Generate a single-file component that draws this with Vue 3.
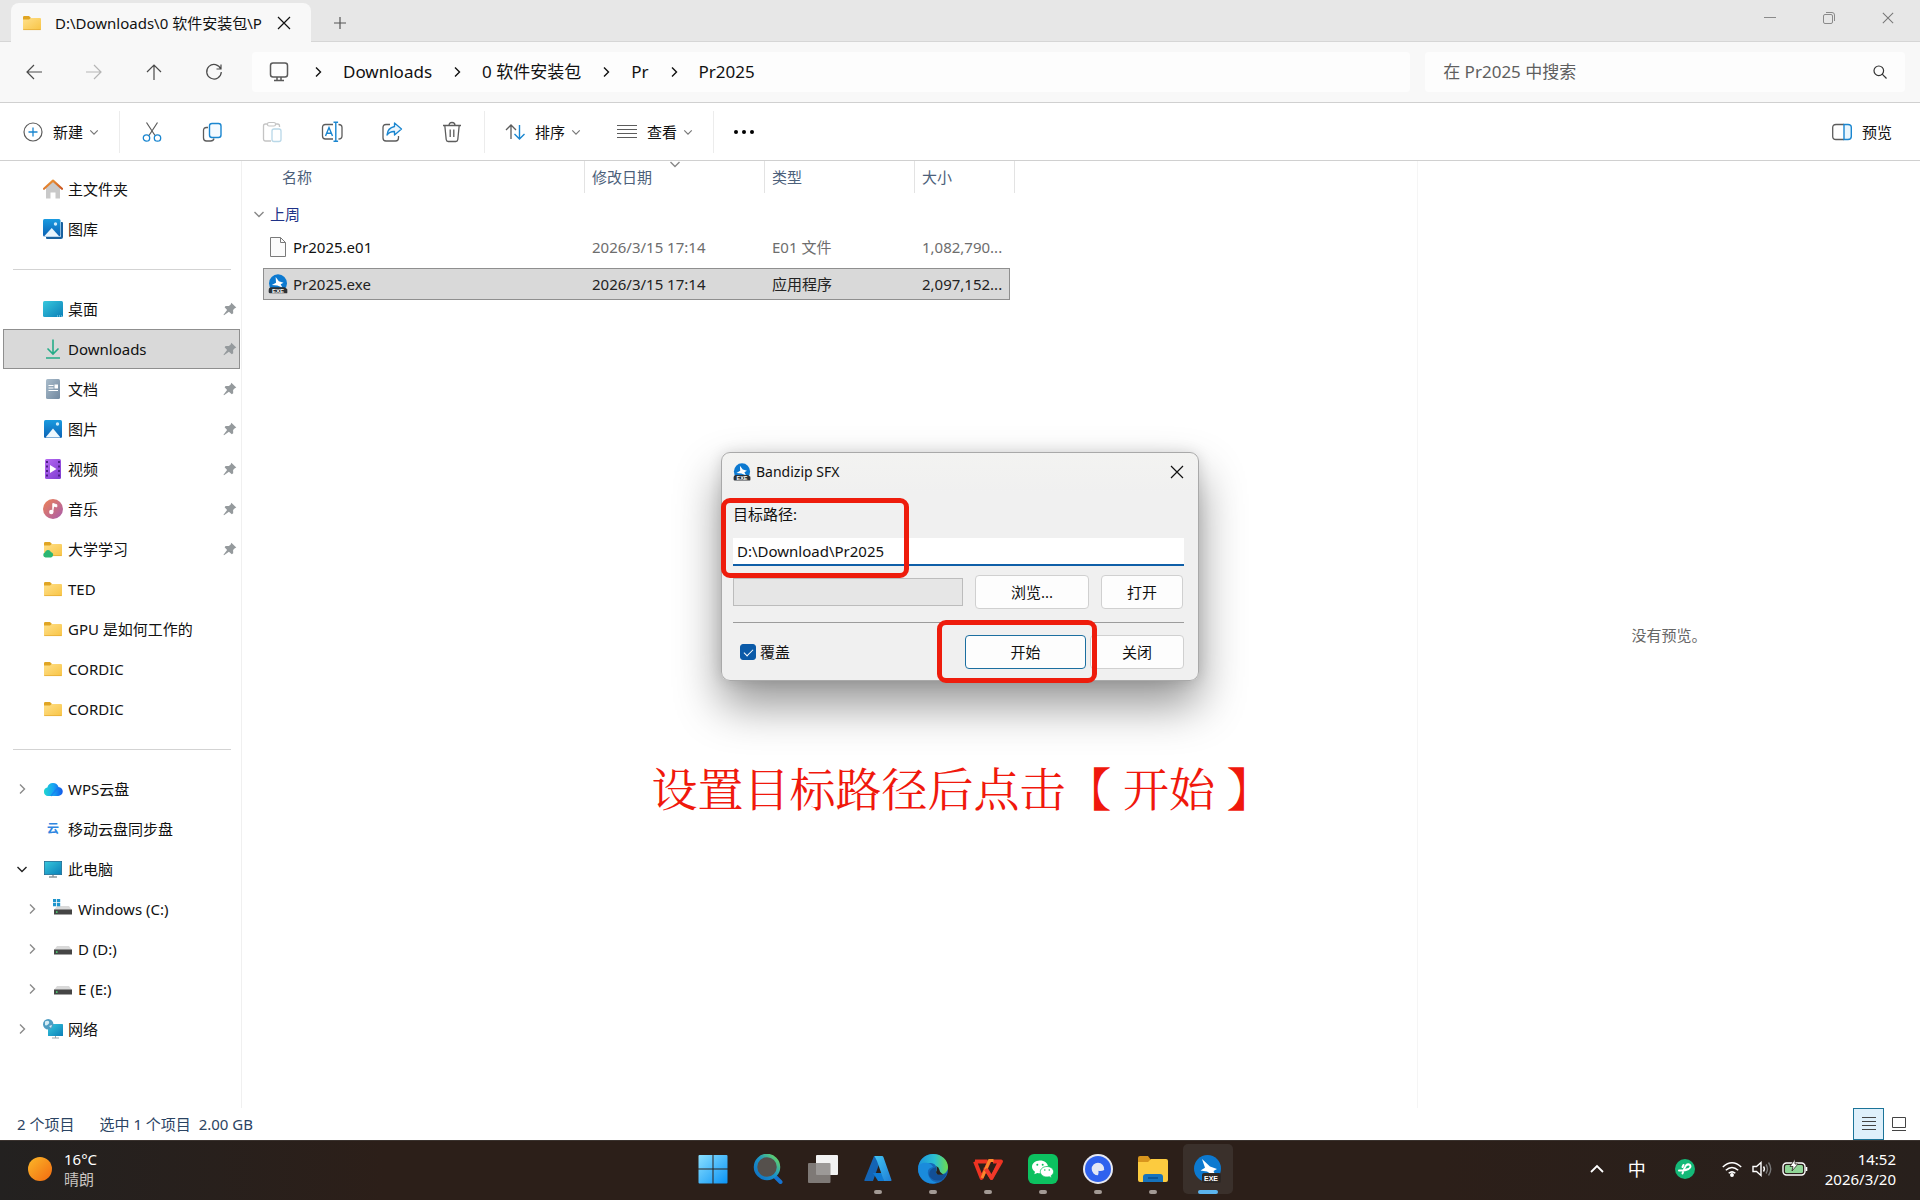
<template>
  <!-- shared icon shapes -->
  <svg class="sprite" aria-hidden="true">
    <defs>
      <linearGradient id="g-folder" x1="0" y1="0" x2="1" y2="1">
        <stop offset="0" stop-color="#ffe08a" />
        <stop offset="1" stop-color="#f8c445" />
      </linearGradient>
      <linearGradient id="g-desk" x1="0" y1="0" x2="1" y2="1">
        <stop offset="0" stop-color="#37c8dd" />
        <stop offset="1" stop-color="#0b7fb8" />
      </linearGradient>
      <linearGradient id="g-blue" x1="0" y1="0" x2="0" y2="1">
        <stop offset="0" stop-color="#1a9be0" />
        <stop offset="1" stop-color="#0c62b4" />
      </linearGradient>
      <linearGradient id="g-grey" x1="0" y1="0" x2="1" y2="1">
        <stop offset="0" stop-color="#a9bccb" />
        <stop offset="1" stop-color="#71889f" />
      </linearGradient>
      <linearGradient id="g-video" x1="0" y1="0" x2="1" y2="1">
        <stop offset="0" stop-color="#b669f2" />
        <stop offset="1" stop-color="#7d3cd0" />
      </linearGradient>
      <linearGradient id="g-music" x1="0" y1="0" x2="1" y2="1">
        <stop offset="0" stop-color="#ef8354" />
        <stop offset="1" stop-color="#a75cae" />
      </linearGradient>
      <linearGradient id="g-wps" x1="0" y1="0" x2="1" y2="0">
        <stop offset="0" stop-color="#1fd6d0" />
        <stop offset="0.5" stop-color="#18a5f3" />
        <stop offset="1" stop-color="#1258ea" />
      </linearGradient>
      <linearGradient id="g-roof" x1="0" y1="0" x2="1" y2="1">
        <stop offset="0" stop-color="#f2a13c" />
        <stop offset="1" stop-color="#c9541f" />
      </linearGradient>
      <linearGradient id="g-win" x1="0" y1="0" x2="1" y2="1">
        <stop offset="0" stop-color="#8be0ff" />
        <stop offset="1" stop-color="#0a93f5" />
      </linearGradient>
      <linearGradient id="g-sun" x1="0" y1="0" x2="1" y2="1">
        <stop offset="0" stop-color="#fbb829" />
        <stop offset="1" stop-color="#f26a10" />
      </linearGradient>
      <linearGradient id="g-ring" x1="0" y1="1" x2="1" y2="0">
        <stop offset="0" stop-color="#0f6fc4" />
        <stop offset="0.5" stop-color="#1a93c8" />
        <stop offset="1" stop-color="#6fdc5a" />
      </linearGradient>
      <linearGradient id="g-edge" x1="0" y1="0" x2="1" y2="0">
        <stop offset="0" stop-color="#1c93dc" />
        <stop offset="0.55" stop-color="#2bc0d2" />
        <stop offset="1" stop-color="#6edc4c" />
      </linearGradient>
      <linearGradient id="g-azure" x1="0" y1="0" x2="1" y2="1">
        <stop offset="0" stop-color="#41c4f2" />
        <stop offset="1" stop-color="#1f7fd6" />
      </linearGradient>
    </defs>

    <symbol id="i-folder" viewBox="0 0 20 20">
      <path d="M1 4.2Q1 3 2.2 3H7l2 2-1.5 3H1z" fill="#e0a523" />
      <path d="M1 6.5h6L9 5h9q1 0 1 1v10q0 1-1 1H2q-1 0-1-1z" fill="url(#g-folder)" />
      <path d="M1.2 16.6h17.6" stroke="#e3ab35" stroke-width=".8" />
    </symbol>
    <symbol id="i-folder-cloud" viewBox="0 0 20 20">
      <use href="#i-folder" />
      <path d="M2.5 18.5a2.6 2.6 0 0 1-.6-5 3.2 3.2 0 0 1 6-.6 2.9 2.9 0 0 1 .3 5.6z" fill="#2bb673" />
    </symbol>
    <symbol id="i-home" viewBox="0 0 20 20">
      <path d="M3 9l7-6.5L17 9v10.5h-4.500v-6h-5v6H3z" fill="#c9c9c9" />
      <path d="M1 9.800L10 1.600l9 8.200" fill="none" stroke="url(#g-roof)" stroke-width="2.200" stroke-linecap="round" stroke-linejoin="round" />
    </symbol>
    <symbol id="i-gallery" viewBox="0 0 20 20">
      <path d="M4 3h15q1 0 1 1v14q0 2-2 2H4q-1 0-1-1z" fill="#19619f" />
      <rect width="18" height="18" rx="1.500" fill="#fff" />
      <rect width="17.500" height="17.500" rx="1.500" fill="url(#g-blue)" />
      <circle cx="12.500" cy="5" r="1.700" fill="#cdeafa" />
      <path d="M1 17.500L8.700 9l7.700 8.500z" fill="#e9f5fd" />
    </symbol>
    <symbol id="i-desktop" viewBox="0 0 20 20">
      <rect x="0" y="2" width="20" height="16" rx="1.500" fill="url(#g-desk)" />
      <path d="M14 17h1M16 17h1M18 17h1" stroke="#9fe2ef" />
    </symbol>
    <symbol id="i-download" viewBox="0 0 20 20">
      <path d="M10 .5v14M4.500 9.500l5.500 5.500 5.500-5.500M3 19h14" fill="none" stroke="#26ac88" stroke-width="1.600" />
    </symbol>
    <symbol id="i-document" viewBox="0 0 20 20">
      <rect x="3" y="0" width="14" height="20" rx="1.500" fill="url(#g-grey)" />
      <path d="M5.500 6.500h5M5.500 9h5M5.500 11.500h9.500" stroke="#fff" stroke-width="1.200" />
      <rect x="11.500" y="5.500" width="3.500" height="4" fill="#fff" />
    </symbol>
    <symbol id="i-picture" viewBox="0 0 20 20">
      <rect x="1" y="1" width="18" height="18" rx="1.500" fill="url(#g-blue)" />
      <circle cx="14.500" cy="5" r="1.700" fill="#cdeafa" />
      <path d="M2.500 18.500L10 9.500l7.500 9z" fill="#eef8fe" />
    </symbol>
    <symbol id="i-video" viewBox="0 0 20 20">
      <rect x="2" y="0" width="16" height="20" rx="1.500" fill="url(#g-video)" />
      <path d="M4 2v17M16 2v17" stroke="#4c2085" stroke-width="2" stroke-dasharray="2 2.500" />
      <path d="M7 6l6.500 4L7 14z" fill="#fff" />
    </symbol>
    <symbol id="i-music" viewBox="0 0 20 20">
      <circle cx="10" cy="10" r="10" fill="url(#g-music)" />
      <circle cx="8.300" cy="13" r="2.200" fill="#fff" />
      <path d="M9.800 13V4.500l4 1.200v2.200l-2.600-.6" fill="#fff" stroke="#fff" stroke-width="1" />
    </symbol>
    <symbol id="i-wps-cloud" viewBox="0 0 20 20">
      <path d="M5 17a4.300 4.300 0 0 1-.6-8.500A5.800 5.800 0 0 1 15.500 8 4.500 4.500 0 0 1 15 17z" fill="url(#g-wps)" />
      <path d="M8 17l4-5q2-3 4-2.500" fill="none" stroke="#1b6cf0" stroke-width="1.500" opacity=".5" />
    </symbol>
    <symbol id="i-pc" viewBox="0 0 20 20">
      <rect x="1.400" y="2.400" width="17.200" height="13.200" fill="url(#g-desk)" stroke="#1d6d94" stroke-width=".8" />
      <path d="M10 16v2M6 18h8" stroke="#8c969c" stroke-width="1.400" />
    </symbol>
    <symbol id="i-drive" viewBox="0 0 20 20">
      <path d="M4 7h12l3 4H1z" fill="#d9d9d9" />
      <rect x="1" y="10.500" width="18" height="5" fill="#454545" />
      <rect x="3" y="12.300" width="1.500" height="1.500" fill="#4fe07a" />
    </symbol>
    <symbol id="i-drive-win" viewBox="0 0 20 20">
      <use href="#i-drive" />
      <path d="M0 0h3.200v3.200H0zM4 0h3.200v3.200H4zM0 4h3.200v3.200H0zM4 4h3.200v3.200H4z" fill="#1f95cc" />
    </symbol>
    <symbol id="i-network" viewBox="0 0 20 20">
      <rect x="5" y="5" width="15" height="12" rx=".6" fill="url(#g-desk)" />
      <path d="M12.500 17v2M9 19h7" stroke="#9aa4aa" />
      <circle cx="5.200" cy="5.200" r="5.200" fill="#4f9dc2" />
      <path d="M2 2.500q3-1.500 4 0t-1 3-3 .5zM6 7l3-1-1 3z" fill="#d5ecf5" />
    </symbol>
    <symbol id="i-pin" viewBox="0 0 14 14">
      <path d="M8.300.8l5 4.800-1.500.6-1.700 1.900.1 3.200-1.400 1L5.900 9.700 1 13.300l-.5-.6L4.100 8 1.600 5.300l1-1.400 3.300.2L7.700 2.400z" fill="#959a9d" />
    </symbol>
    <symbol id="i-file" viewBox="0 0 20 20">
      <path d="M2.500.5h10l5 5v14h-15z" fill="#fbfbfb" stroke="#7a7a7a" />
      <path d="M12.500.5v5h5" fill="none" stroke="#7a7a7a" />
    </symbol>
    <symbol id="i-exe" viewBox="0 0 30 30">
      <circle cx="15" cy="14" r="13.500" fill="#0c79d0" />
      <path d="M11.500 4.500l4.800 6.500 7 2-4.300 2.300 2.500 5-7.500-3-8.300-.8 6.300-3.500z" fill="#fff" />
      <path d="M5 20h20l4 3v5q0 1-1 1H3q-2 0-2-2v-2q0-5 4-5z" fill="#2c3136" />
    </symbol>

    <symbol id="i-close" viewBox="0 0 14 14">
      <path d="M1 1l12 12M13 1L1 13" fill="none" stroke="currentColor" stroke-width="1.200" />
    </symbol>
    <symbol id="i-right" viewBox="0 0 12 12">
      <path d="M4 1.500L8.500 6 4 10.500" fill="none" stroke="currentColor" stroke-width="1.400" />
    </symbol>
    <symbol id="i-down" viewBox="0 0 12 12">
      <path d="M1.500 4L6 8.500 10.500 4" fill="none" stroke="currentColor" stroke-width="1.400" />
    </symbol>

    <symbol id="i-back" viewBox="0 0 18 18">
      <path d="M17 9H2M9 2L2 9l7 7" fill="none" stroke="currentColor" stroke-width="1.200" />
    </symbol>
    <symbol id="i-forward" viewBox="0 0 18 18">
      <path d="M1 9h15M9 2l7 7-7 7" fill="none" stroke="currentColor" stroke-width="1.200" />
    </symbol>
    <symbol id="i-up" viewBox="0 0 18 18">
      <path d="M9 17V2M2 9l7-7 7 7" fill="none" stroke="currentColor" stroke-width="1.200" />
    </symbol>
    <symbol id="i-refresh" viewBox="0 0 18 18">
      <path d="M15.800 6A7.300 7.300 0 1 0 16.300 9M16 1.500V6h-4.500" fill="none" stroke="currentColor" stroke-width="1.200" />
    </symbol>

    <symbol id="i-cut" viewBox="0 0 22 22">
      <path d="M5.500 1.500l8.500 13M16.500 1.500L8 14.500" fill="none" stroke="#5c5c5c" stroke-width="1.200" />
      <circle cx="5.500" cy="17" r="3.200" fill="none" stroke="#1a86d0" stroke-width="1.300" />
      <circle cx="16.500" cy="17" r="3.200" fill="none" stroke="#1a86d0" stroke-width="1.300" />
    </symbol>
    <symbol id="i-copy" viewBox="0 0 22 22">
      <path d="M7 6.500H5.500q-3 0-3 3V17q0 3 3 3h4q3 0 3.500-2.500" fill="none" stroke="#5c5c5c" stroke-width="1.300" />
      <rect x="8.500" y="2.500" width="11.500" height="14" rx="2.500" fill="#f4faff" stroke="#1a86d0" stroke-width="1.400" />
    </symbol>
    <symbol id="i-paste" viewBox="0 0 22 22">
      <path d="M10 20H4.500q-2 0-2-2V5q0-2 2-2H6m9 0h1.500q2 0 2 2v1" fill="none" stroke="#c4c4c4" stroke-width="1.300" />
      <rect x="6.500" y="1.500" width="8" height="3.500" rx="1.500" fill="none" stroke="#c4c4c4" stroke-width="1.200" />
      <rect x="11" y="8" width="9" height="12.500" rx="2" fill="#fff" stroke="#b9d8e8" stroke-width="1.300" />
    </symbol>
    <symbol id="i-rename" viewBox="0 0 22 22">
      <path d="M12 3.500H4.500q-3 0-3 3V15q0 3 3 3H12M17.500 3.500q3.500 0 3.500 3V15q0 3-3.500 3" fill="none" stroke="#5c5c5c" stroke-width="1.300" />
      <path d="M14.800 1.500v18.500M12.500 1.300h4.600M12.500 20.300h4.600M4.500 15L8 6.500l3.500 8.500M5.600 12.300h4.800" fill="none" stroke="#1a86d0" stroke-width="1.400" />
    </symbol>
    <symbol id="i-share" viewBox="0 0 22 22">
      <path d="M9 3.500H5q-3 0-3 3V17q0 3 3 3h9.500q3 0 3-3v-2" fill="none" stroke="#5c5c5c" stroke-width="1.300" />
      <path d="M13.500 2l7 6-7 6v-3.500q-4.500-.3-7.500 3.500 .5-7 7.500-8.500z" fill="#eaf5fd" stroke="#1a86d0" stroke-width="1.300" stroke-linejoin="round" />
    </symbol>
    <symbol id="i-trash" viewBox="0 0 22 22">
      <path d="M2 4.500h18M3.800 4.500l1.400 14q.2 2 2 2h7.600q1.800 0 2-2l1.400-14M8 4.500Q8 1.500 11 1.500t3 3M9.200 8.500v7.500M12.800 8.500v7.500" fill="none" stroke="#5c5c5c" stroke-width="1.300" />
    </symbol>
    <symbol id="i-new" viewBox="0 0 20 20">
      <circle cx="10" cy="10" r="9" fill="none" stroke="#5c5c5c" stroke-width="1.200" />
      <path d="M10 5.500v9M5.500 10h9" stroke="#1a86d0" stroke-width="1.300" />
    </symbol>
    <symbol id="i-sort" viewBox="0 0 20 20">
      <path d="M6 17V3M1 8l5-5 5 5" fill="none" stroke="#5c5c5c" stroke-width="1.300" />
      <path d="M14.500 3v14M9.500 12l5 5 5-5" fill="none" stroke="#1a86d0" stroke-width="1.400" />
    </symbol>
    <symbol id="i-view" viewBox="0 0 20 20">
      <path d="M0 3.500h20M0 7.500h20M0 11.500h20M0 15.500h20" stroke="#5c5c5c" />
    </symbol>
    <symbol id="i-preview" viewBox="0 0 20 20">
      <path d="M12 2.500H4q-3.300 0-3.300 3v9q0 3 3.300 3h8" fill="none" stroke="#5c5c5c" stroke-width="1.300" />
      <path d="M12 2.500h4q3.300 0 3.300 3v9q0 3-3.300 3h-4z" fill="#eaf6fd" stroke="#1a86d0" stroke-width="1.400" />
    </symbol>

    <!-- taskbar -->
    <symbol id="t-start" viewBox="0 0 30 30">
      <path d="M1.500 1h13v13.500H.5V2q0-1 1-1zM15.500 1h13q1 0 1 1v12.500h-14zM.5 15.500h14v14h-13q-1 0-1-1zM15.500 15.500h14v13q0 1-1 1h-13z" fill="url(#g-win)" />
    </symbol>
    <symbol id="t-search" viewBox="0 0 30 30">
      <path d="M20.500 21l7 7" stroke="#1673cf" stroke-width="4" stroke-linecap="round" />
      <circle cx="14" cy="13" r="11.500" fill="#55504c" stroke="url(#g-ring)" stroke-width="3.500" />
    </symbol>
    <symbol id="t-tasks" viewBox="0 0 30 30">
      <rect x="8" y="1" width="22" height="20" rx="1" fill="#f2f2f2" />
      <rect x="0" y="9" width="22.500" height="20" rx="1" fill="#8d8987" opacity=".85" />
    </symbol>
    <symbol id="t-azure" viewBox="0 0 30 30">
      <path d="M11 2h8L10 27H2q-1 0-.6-1z" fill="#1464b4" />
      <path d="M10 19h10l1 8h-6z" fill="#0f7bd4" />
      <path d="M11.500 2h7.500q1 0 1.400 1L28.500 26q.3 1-.8 1H21L14 7z" fill="url(#g-azure)" />
    </symbol>
    <symbol id="t-edge" viewBox="0 0 30 30">
      <circle cx="15" cy="15" r="15" fill="#1668b8" />
      <path d="M.2 13C1.500 5 8 0 15 0c9 0 15 6.500 15 13 0 5-4 7.500-7.500 7.500-3 0-5-1.300-4.500-2.500 1.500-2.500 1-8.500-5-9-6 0-11 3-12.800 4z" fill="url(#g-edge)" />
      <path d="M.1 14C1 9 6 8 10 9q4 1 5 4-6 1-5 7 1.500 7 9 8.500C9 32-.5 24 .1 14z" fill="#1a8bdc" />
      <path d="M18 18q-.5 3 4.500 3 4 0 6.500-2-1.500 4-5 7-8 2-12-3-2.500-5 2.500-8.500 2.500-1 3.500-1.500 1.500 2 0 5z" fill="#124f96" />
      <path d="M18 18q2-3 0-6 3 1 3.500 4 .5 3 4 4.400-7 1.600-7.500-2.400z" fill="#2a211c" />
    </symbol>
    <symbol id="t-wps" viewBox="0 0 30 30">
      <path d="M2 7.500h12.500M2 7.500l6.500 16.500L16.500 7M12 13l6.500 11L28 7.500H20" fill="none" stroke="#ee3322" stroke-width="3.800" stroke-linejoin="round" />
      <path d="M9 24L16.500 6.500h4" fill="none" stroke="#f9882c" stroke-width="3" />
      <path d="M12.500 15l6 9L26 9" fill="none" stroke="#f0392a" stroke-width="3.500" stroke-linejoin="round" />
    </symbol>
    <symbol id="t-wechat" viewBox="0 0 30 30">
      <rect width="30" height="30" rx="6" fill="#0cc160" />
      <path d="M12 6.500c-4.400 0-8 2.800-8 6.300 0 2 1.200 3.800 3 5L6.300 20.300l3-1.400c.9.200 1.800.3 2.700.3 4.400 0 8-2.800 8-6.400s-3.600-6.300-8-6.300z" fill="#fff" />
      <path d="M19 12.500c-3.700 0-6.700 2.300-6.700 5.200s3 5.300 6.700 5.300q1.100 0 2.200-.3l2.500 1.200-.6-2.200c1.500-1 2.500-2.400 2.500-4 0-2.900-3-5.200-6.600-5.200z" fill="#fff" stroke="#0cc160" stroke-width=".8" />
      <g fill="#0cc160"><circle cx="9.300" cy="10.700" r="1" /><circle cx="14.700" cy="10.700" r="1" /><circle cx="16.800" cy="16" r=".8" /><circle cx="21.300" cy="16" r=".8" /></g>
    </symbol>
    <symbol id="t-quark" viewBox="0 0 30 30">
      <circle cx="15" cy="15" r="15" fill="#e7e9f2" />
      <circle cx="15" cy="15" r="13" fill="#2f62ee" />
      <path d="M15 8.700a6.300 6.300 0 1 0 0 12.600q1-3 .4-4.600 3 .8 5.800-.8A6.300 6.300 0 0 0 15 8.700z" fill="#e4e8f4" />
    </symbol>
    <symbol id="t-explorer" viewBox="0 0 30 30">
      <path d="M0 4q0-2 2-2h8l3 4-2 4H0z" fill="#d8951d" />
      <path d="M0 8h10l3-3h15q2 0 2 2v19q0 2-2 2H2q-2 0-2-2z" fill="#fccb3f" />
      <path d="M5 28v-5q0-3 3-3h14q3 0 3 3v5z" fill="#1673bd" />
      <path d="M10 24h10" stroke="#0a4d8c" stroke-width="1.500" />
    </symbol>
    <symbol id="t-exe" viewBox="0 0 30 30">
      <circle cx="14.500" cy="14.500" r="13.500" fill="#0c79d0" />
      <path d="M9 5l8 7.500 7 2.500-3.500 2 3 6.500L14 17.500l-6.500-1 4.500-2.800z" fill="#fff" />
      <rect x="9" y="19" width="19" height="10" rx="2" fill="#2d2825" />
    </symbol>
  </svg>

  <div class="screen">
    <div class="explorer">
      <header class="tabs">
        <div class="tab">
          <svg class="ico"><use href="#i-folder" /></svg>
          <span class="tab-title">D:\Downloads\0 软件安装包\P</span>
          <button aria-label="关闭标签页"><svg class="x"><use href="#i-close" /></svg></button>
        </div>
        <button class="add" aria-label="新标签页">
          <svg class="x" viewBox="0 0 14 14"><path d="M7 1v12M1 7h12" stroke="#555" stroke-width="1.200" /></svg>
        </button>
        <div class="win-btns">
          <button aria-label="最小化"><svg viewBox="0 0 12 12"><path d="M0 5.500h12" stroke="#8a8a8a" /></svg></button>
          <button aria-label="还原">
            <svg viewBox="0 0 12 12" fill="none" stroke="#8a8a8a">
              <rect x=".5" y="2.500" width="9" height="9" rx="1.500" />
              <path d="M3 .5h6q2.500 0 2.500 2.500v6" />
            </svg>
          </button>
          <button aria-label="关闭"><svg><use href="#i-close" /></svg></button>
        </div>
      </header>

      <nav class="nav">
        <div class="nav-btns">
          <button v-for="b in navBtns" :key="b.icon" :aria-label="b.label" :disabled="b.off">
            <svg><use :href="'#i-' + b.icon" /></svg>
          </button>
        </div>
        <div class="address">
          <svg class="monitor" viewBox="0 0 20 20" fill="none" stroke="#5a5a5a" stroke-width="1.500">
            <rect x="1.500" y="1" width="17" height="14" rx="2.500" />
            <path d="M8 15v3M12 15v3M5 18.500h10" />
          </svg>
          <template v-for="c in crumbs" :key="c">
            <svg class="crumb-arrow"><use href="#i-right" /></svg>
            <a href="#">{{ c }}</a>
          </template>
        </div>
        <label class="search">
          <input type="text" placeholder="在 Pr2025 中搜索" aria-label="搜索" />
          <svg viewBox="0 0 14 14" fill="none" stroke="#333" stroke-width="1.200">
            <circle cx="5.800" cy="5.800" r="4.800" />
            <path d="M9.200 9.200l4.300 4.300" />
          </svg>
        </label>
      </nav>

      <div class="toolbar">
        <button class="tool new">
          <svg class="ico"><use href="#i-new" /></svg>新建<svg class="caret"><use href="#i-down" /></svg>
        </button>
        <i class="sep"></i>
        <button v-for="t in tools" :key="t.icon" class="tool-ico" :aria-label="t.label">
          <svg><use :href="'#i-' + t.icon" /></svg>
        </button>
        <i class="sep"></i>
        <button class="tool">
          <svg class="ico"><use href="#i-sort" /></svg>排序<svg class="caret"><use href="#i-down" /></svg>
        </button>
        <button class="tool">
          <svg class="ico"><use href="#i-view" /></svg>查看<svg class="caret"><use href="#i-down" /></svg>
        </button>
        <i class="sep"></i>
        <button class="tool" aria-label="更多">
          <svg class="ico" viewBox="0 0 20 20"><circle cx="2" cy="10" r="2" /><circle cx="10" cy="10" r="2" /><circle cx="18" cy="10" r="2" /></svg>
        </button>
        <button class="tool preview-btn"><svg class="ico"><use href="#i-preview" /></svg>预览</button>
      </div>

      <main class="body">
        <aside class="side">
          <template v-for="(n, i) in sideItems" :key="i">
            <hr v-if="n.line" />
            <a v-else href="#" :class="{ active: n.active, child: n.child }">
              <span class="fold" :class="{ open: n.fold === 'down' }">
                <svg v-if="n.fold"><use :href="'#i-' + n.fold" /></svg>
              </span>
              <b v-if="n.glyph" class="ico glyph">{{ n.glyph }}</b>
              <svg v-else class="ico"><use :href="'#i-' + n.icon" /></svg>
              <span class="name">{{ n.name }}</span>
              <svg v-if="n.pin" class="pin"><use href="#i-pin" /></svg>
            </a>
          </template>
        </aside>

        <section class="files">
          <table>
            <colgroup>
              <col class="c-edge" />
              <col class="c-name" />
              <col class="c-date" />
              <col class="c-type" />
              <col class="c-size" />
              <col class="c-end" />
            </colgroup>
            <thead>
              <tr>
                <td></td>
                <th class="h-name">名称</th>
                <th class="sorted">修改日期<svg><use href="#i-down" /></svg></th>
                <th>类型</th>
                <th colspan="2">大小</th>
              </tr>
            </thead>
            <tbody>
              <tr class="group">
                <td colspan="6"><svg><use href="#i-down" /></svg>上周</td>
              </tr>
              <tr v-for="f in files" :key="f.name" class="file" :class="{ selected: f.selected }">
                <td class="edge"></td>
                <td class="f-name">
                  <div>
                    <svg v-if="f.icon === 'exe'" class="ico" viewBox="0 0 30 30"><use href="#i-exe" /><ExeText :x="15" :y="28" :size="9" /></svg>
                    <svg v-else class="ico"><use :href="'#i-' + f.icon" /></svg>
                    {{ f.name }}
                  </div>
                </td>
                <td>{{ f.date }}</td>
                <td>{{ f.type }}</td>
                <td class="f-size">{{ f.size }}</td>
                <td class="edge"></td>
              </tr>
            </tbody>
          </table>
        </section>

        <section class="preview">没有预览。</section>
      </main>

      <footer class="status">
        <span>2 个项目</span>
        <span class="picked">选中 1 个项目&nbsp; 2.00 GB</span>
        <div class="modes">
          <button class="on" aria-label="详细信息">
            <svg viewBox="0 0 14 14"><path d="M0 .5h14M0 4.500h14M0 8.500h14M0 12.500h14" stroke="#444" /></svg>
          </button>
          <button aria-label="大图标">
            <svg viewBox="0 0 14 14" fill="none" stroke="#444"><path d="M.5.5h13v10H.5zM0 13.500h14" /></svg>
          </button>
        </div>
      </footer>
    </div>

    <div class="taskbar">
      <button class="weather">
        <svg viewBox="0 0 24 24"><circle cx="12" cy="12" r="12" fill="url(#g-sun)" /></svg>
        <span>16°C<br /><em>晴朗</em></span>
      </button>
      <div class="apps">
        <button v-for="a in apps" :key="a.icon" :aria-label="a.label" :class="{ running: a.running, current: a.current }">
          <svg viewBox="0 0 30 30"><use :href="'#t-' + a.icon" /><ExeText v-if="a.icon === 'exe'" :x="18" :y="27" :size="7" /></svg>
        </button>
      </div>
      <div class="tray">
        <button class="t-up" aria-label="显示隐藏的图标">
          <svg viewBox="0 0 14 14" fill="none" stroke="#fff" stroke-width="1.800"><path d="M1 10l6-6 6 6" /></svg>
        </button>
        <button class="t-ime">中</button>
        <button class="t-green" aria-label="同步">
          <svg viewBox="0 0 20 20">
            <circle cx="10" cy="10" r="10" fill="#14b978" />
            <path d="M4 11.500q6 .3 9.500-1.500 3-2 1.500-4-2-1.500-4 .5Q9 9 7.500 14.500M8.500 6L7.500 8" fill="none" stroke="#fff" stroke-width="2" stroke-linecap="round" />
          </svg>
        </button>
        <button class="t-sys" aria-label="网络、音量和电池">
          <svg class="s-wifi" viewBox="0 0 20 20" fill="none" stroke="#fff" stroke-width="1.500">
            <path d="M.8 8Q10-.5 19.200 8M3.800 11.300q6.200-5.600 12.400 0M6.700 14.300q3.300-2.800 6.600 0" />
            <circle cx="10" cy="16" r="1.200" fill="#fff" />
          </svg>
          <svg class="s-vol" viewBox="0 0 20 20" fill="none" stroke="#fff" stroke-width="1.400">
            <path d="M1 7.500h3.500L9 3.500v13l-4.500-4H1zM11.500 7.500q1.800 2.500 0 5" />
            <path d="M14 5.500q3 4.500 0 9M16.500 3.500q4.500 6.500 0 13" stroke="#777" />
          </svg>
          <svg class="s-bat" viewBox="0 0 26 20">
            <rect x="1" y="4" width="22" height="12" rx="3.500" fill="none" stroke="#fff" stroke-width="1.400" />
            <rect x="3" y="6" width="18" height="8" rx="1.500" fill="#8fd596" />
            <path d="M24.500 8v4" stroke="#fff" stroke-width="1.600" />
            <path d="M13 0L8 7.500h3L10 12l6-7h-3z" fill="#fff" stroke="#2a211c" stroke-width=".8" />
          </svg>
        </button>
        <div class="clock">14:52<br />2026/3/20</div>
      </div>
    </div>

    <div class="overlay">
      <form class="dialog" @submit.prevent>
        <div class="d-title">
          <svg viewBox="0 0 30 30"><use href="#i-exe" /><ExeText :x="15" :y="28" :size="9" /></svg>
          <span>Bandizip SFX</span>
          <button type="button" aria-label="关闭窗口"><svg class="x"><use href="#i-close" /></svg></button>
        </div>
        <label class="d-label" for="path">目标路径:</label>
        <input id="path" v-model="path" class="d-path" type="text" />
        <div class="d-row">
          <div class="d-progress"></div>
          <button type="button" class="browse">浏览...</button>
          <button type="button" class="open">打开</button>
        </div>
        <div class="d-foot">
          <input id="over" v-model="overwrite" type="checkbox" />
          <label for="over">覆盖</label>
          <button type="submit" class="go">开始</button>
          <button type="button" class="cancel">关闭</button>
        </div>
        <div class="mark mark-path"></div>
        <div class="mark mark-go"></div>
      </form>
      <p class="tip">设置目标路径后点击【 开始 】</p>
    </div>
  </div>
</template>

<script setup>
import { ref, h } from "vue";

const path = ref("D:\\Download\\Pr2025");
const overwrite = ref(true);

// EXE 角标文字
const ExeText = (p) =>
  h(
    "text",
    {
      x: p.x,
      y: p.y,
      "font-size": p.size,
      "font-weight": 700,
      "font-family": "Liberation Sans, sans-serif",
      "text-anchor": "middle",
      fill: "#fff",
    },
    "EXE"
  );
ExeText.props = ["x", "y", "size"];

const navBtns = [
  { icon: "back", label: "后退" },
  { icon: "forward", label: "前进", off: true },
  { icon: "up", label: "向上" },
  { icon: "refresh", label: "刷新" },
];

const crumbs = ["Downloads", "0 软件安装包", "Pr", "Pr2025"];

const tools = [
  { icon: "cut", label: "剪切" },
  { icon: "copy", label: "复制" },
  { icon: "paste", label: "粘贴" },
  { icon: "rename", label: "重命名" },
  { icon: "share", label: "共享" },
  { icon: "trash", label: "删除" },
];

const sideItems = [
  { name: "主文件夹", icon: "home" },
  { name: "图库", icon: "gallery" },
  { line: true },
  { name: "桌面", icon: "desktop", pin: true },
  { name: "Downloads", icon: "download", pin: true, active: true },
  { name: "文档", icon: "document", pin: true },
  { name: "图片", icon: "picture", pin: true },
  { name: "视频", icon: "video", pin: true },
  { name: "音乐", icon: "music", pin: true },
  { name: "大学学习", icon: "folder-cloud", pin: true },
  { name: "TED", icon: "folder" },
  { name: "GPU 是如何工作的", icon: "folder" },
  { name: "CORDIC", icon: "folder" },
  { name: "CORDIC", icon: "folder" },
  { line: true },
  { name: "WPS云盘", icon: "wps-cloud", fold: "right" },
  { name: "移动云盘同步盘", glyph: "云" },
  { name: "此电脑", icon: "pc", fold: "down" },
  { name: "Windows (C:)", icon: "drive-win", fold: "right", child: true },
  { name: "D (D:)", icon: "drive", fold: "right", child: true },
  { name: "E (E:)", icon: "drive", fold: "right", child: true },
  { name: "网络", icon: "network", fold: "right" },
];

const files = [
  { name: "Pr2025.e01", icon: "file", date: "2026/3/15 17:14", type: "E01 文件", size: "1,082,790..." },
  { name: "Pr2025.exe", icon: "exe", date: "2026/3/15 17:14", type: "应用程序", size: "2,097,152...", selected: true },
];

const apps = [
  { icon: "start", label: "开始菜单" },
  { icon: "search", label: "搜索" },
  { icon: "tasks", label: "任务视图" },
  { icon: "azure", label: "Azure", running: true },
  { icon: "edge", label: "Edge", running: true },
  { icon: "wps", label: "WPS", running: true },
  { icon: "wechat", label: "微信", running: true },
  { icon: "quark", label: "夸克", running: true },
  { icon: "explorer", label: "文件资源管理器", running: true },
  { icon: "exe", label: "Bandizip SFX", current: true },
];
</script>

<style>
body {
  margin: 0;
}
</style>

<style scoped>
.sprite {
  position: absolute;
  width: 0;
  height: 0;
}
.screen {
  position: relative;
  display: flex;
  flex-direction: column;
  min-height: 100vh;
  background: #fff;
  color: #111;
  font-family: "Noto Sans", "Noto Sans CJK SC", sans-serif;
  font-size: 15px;
  line-height: 20px;
}
.screen * {
  box-sizing: border-box;
}
svg {
  flex: none;
}
a {
  color: inherit;
  text-decoration: none;
}
button,
input {
  margin: 0;
  padding: 0;
  border: none;
  background: none;
  color: inherit;
  font: inherit;
}
button {
  display: flex;
  align-items: center;
  justify-content: center;
}
.ico {
  width: 20px;
  height: 20px;
}
.x {
  width: 14px;
  height: 14px;
}
.explorer {
  flex: 1;
  display: flex;
  flex-direction: column;
}

/* 标签栏 */
.tabs {
  display: flex;
  height: 42px;
  padding-left: 11px;
  background: #e7e7e7;
  box-shadow: inset 0 -1px #d6d6d6;
}
.tab {
  display: flex;
  align-items: center;
  justify-content: space-between;
  width: 300px;
  margin-top: 3px;
  padding: 0 20px 0 11px;
  border-radius: 8px 8px 0 0;
  background: #f8f8f8;
}
.tab-title {
  flex: 1;
  margin-left: 13px;
  white-space: nowrap;
}
.add {
  width: 58px;
  padding-top: 3px;
}
.win-btns {
  display: flex;
  height: 36px;
  margin-left: auto;
  padding-right: 3px;
  color: #777;
}
.win-btns button {
  width: 59px;
}
.win-btns svg {
  width: 12px;
  height: 12px;
}

/* 导航栏 */
.nav {
  display: flex;
  align-items: center;
  height: 61px;
  padding: 0 15px 0 4px;
  border-bottom: 1px solid #d0d0d0;
  background: #f8f8f8;
}
.nav-btns {
  display: flex;
  margin-right: 8px;
  color: #4a4a4a;
}
.nav-btns button {
  width: 60px;
  height: 40px;
}
.nav-btns button:disabled {
  color: #b5b5b5;
}
.nav-btns svg {
  width: 18px;
  height: 18px;
}
.address,
.search {
  display: flex;
  align-items: center;
  height: 40px;
  border-radius: 4px;
  background: #fdfdfd;
  font-size: 17px;
}
.address {
  flex: 72;
  margin-right: 15px;
  padding-left: 17px;
}
.monitor {
  width: 20px;
  height: 20px;
  margin-right: 4px;
}
.crumb-arrow {
  width: 12px;
  height: 12px;
  margin: 0 19px;
}
.search {
  flex: 28;
  padding: 0 18px;
}
.search input {
  flex: 1;
  min-width: 0;
  outline: none;
}
.search input::placeholder {
  color: #5f5f5f;
}
.search svg {
  width: 14px;
  height: 14px;
}

/* 工具栏 */
.toolbar {
  display: flex;
  align-items: center;
  height: 58px;
  padding-top: 1px;
  border-bottom: 1px solid #d0d0d0;
}
.tool {
  height: 40px;
  padding: 0 18px;
}
.tool.new {
  padding-left: 23px;
}
.tool .ico {
  margin-right: 10px;
}
.caret {
  width: 10px;
  height: 10px;
  margin-left: 6px;
  color: #777;
}
.sep {
  width: 1px;
  height: 42px;
  margin: 0 2px;
  background: #ececec;
}
.tool-ico {
  width: 60px;
  height: 40px;
}
.tool-ico svg {
  width: 22px;
  height: 22px;
}
.preview-btn {
  margin-left: auto;
  padding-right: 28px;
}

/* 主体 */
.body {
  flex: 1;
  display: flex;
}
.side {
  width: 242px;
  padding: 8px 1px 0 3px;
  border-right: 1px solid #f0f0f0;
}
.side a {
  display: flex;
  align-items: center;
  height: 40px;
  padding-right: 2px;
  border: 1px solid transparent;
}
.side a.active {
  border-color: #8f8f8f;
  background: #d9d9d9;
}
.side a.child {
  padding-left: 10px;
}
.side hr {
  height: 1px;
  margin: 20px 9px 19px 10px;
  border: none;
  background: #d3d3d3;
}
.fold {
  display: flex;
  justify-content: center;
  width: 39px;
  padding-right: 4px;
  color: #8a8a8a;
}
.fold.open {
  color: #222;
}
.fold svg {
  width: 12px;
  height: 12px;
}
.glyph {
  color: #2f86e0;
  font-size: 12px;
  text-align: center;
}
.name {
  flex: 1;
  margin-left: 5px;
  white-space: nowrap;
}
.pin {
  width: 14px;
  height: 14px;
}

.files {
  flex: 1;
}
table {
  width: 773px;
  table-layout: fixed;
  border-collapse: separate;
  border-spacing: 0;
}
.c-edge {
  width: 21px;
}
.c-name {
  width: 322px;
}
.c-date {
  width: 180px;
}
.c-type {
  width: 150px;
}
.c-size {
  width: 95px;
}
.c-end {
  width: 5px;
}
td,
th {
  padding: 0 0 0 7px;
  text-align: left;
  font-weight: normal;
  white-space: nowrap;
}
th {
  height: 32px;
  border-right: 1px solid #e3e3e3;
  color: #4c607a;
}
.h-name {
  padding-left: 19px;
}
.sorted {
  position: relative;
}
.sorted svg {
  position: absolute;
  top: -3px;
  left: calc(50% - 6px);
  width: 12px;
  height: 12px;
  color: #888;
}
.group td {
  height: 38px;
  padding: 3px 0 0 11px;
  color: #1e3287;
}
.group svg {
  width: 12px;
  height: 12px;
  margin-right: 5px;
  color: #888;
}
.file td {
  height: 32px;
  border: 1px solid transparent;
  border-width: 1px 0;
  color: #6d6d6d;
}
.file .edge {
  padding: 0;
}
.file .f-name {
  padding-left: 4px;
  border-left-width: 1px;
  color: #111;
}
.f-name div {
  display: flex;
  align-items: center;
  gap: 5px;
}
.file .f-size {
  border-right-width: 1px;
}
.file.selected td:not(.edge) {
  border-color: #8f8f8f;
  background: #d9d9d9;
  color: #222;
}
.file:not(.selected) td {
  height: 37px;
  padding-bottom: 5px;
}
.preview {
  display: flex;
  align-items: center;
  justify-content: center;
  width: 503px;
  border-left: 1px solid #f5f5f5;
  color: #666;
}

.status {
  display: flex;
  align-items: center;
  height: 32px;
  padding-left: 17px;
  color: #2b4463;
}
.picked {
  margin-left: 25px;
}
.modes {
  display: flex;
  margin-left: auto;
  padding-right: 6px;
}
.modes button {
  width: 30px;
  height: 32px;
}
.modes .on {
  width: 31px;
  border: 1px solid #1c7499;
  background: #dff0fb;
}
.modes svg {
  width: 14px;
  height: 14px;
}

/* 任务栏 */
.taskbar {
  display: grid;
  grid-template-columns: 1fr auto 1fr;
  align-items: center;
  height: 60px;
  padding-bottom: 3px;
  border-top: 1px solid #3a322e;
  background: linear-gradient(90deg, #232120, #2c1f19 20%, #2c1f19 75%, #28201c);
  color: #fff;
}
.weather {
  justify-self: start;
  padding-left: 28px;
  text-align: left;
}
.weather svg {
  width: 24px;
  height: 24px;
  margin-right: 12px;
}
.weather em {
  color: #c9c4c1;
  font-style: normal;
}
.apps {
  display: flex;
  gap: 5px;
}
.apps button {
  position: relative;
  width: 50px;
  height: 50px;
  border-radius: 5px;
}
.apps svg {
  width: 30px;
  height: 30px;
}
.running::after,
.current::after {
  content: "";
  position: absolute;
  bottom: 0;
  left: 21px;
  width: 8px;
  height: 4px;
  border-radius: 2px;
  background: #a39a95;
}
.apps .current {
  background: #3a302b;
}
.current::after {
  left: 15px;
  width: 20px;
  background: #5bb4ee;
}
.tray {
  display: flex;
  align-items: center;
  justify-self: end;
  padding-right: 24px;
}
.tray svg {
  width: 20px;
  height: 20px;
}
.tray .t-up svg {
  width: 14px;
  height: 14px;
}
.t-ime {
  margin: 0 29px 0 24px;
  font-size: 18px;
}
.t-sys {
  gap: 10px;
  margin: 0 17px 0 27px;
}
.tray .s-bat {
  width: 26px;
}
.clock {
  text-align: right;
}

/* 弹窗 */
.overlay {
  position: absolute;
  top: 452px;
  left: 0;
  right: 0;
  display: flex;
  flex-direction: column;
  align-items: center;
}
.dialog {
  position: relative;
  width: 478px;
  padding: 0 14px 11px 11px;
  border: 1px solid #a9a9a9;
  border-radius: 9px;
  background: linear-gradient(#f3f3f1, #f0f0f0 40px);
  box-shadow: 0 24px 46px rgba(0, 0, 0, 0.42), 0 0 14px rgba(0, 0, 0, 0.12);
}
.d-title {
  display: flex;
  align-items: center;
  height: 38px;
  font-size: 14px;
}
.d-title svg:first-child:not(.x) {
  width: 18px;
  height: 18px;
}
.d-title span {
  flex: 1;
  margin-left: 5px;
}
.d-label {
  display: block;
  margin: 13px 0 14px;
}
.d-path {
  display: block;
  width: 100%;
  height: 28px;
  padding-left: 4px;
  border-bottom: 2px solid #0f5fa8;
  background: #fff;
  outline: none;
}
.d-row {
  display: flex;
  align-items: center;
  height: 57px;
  padding: 0 1px 4px 0;
  border-bottom: 1px solid #9c9c9c;
}
.d-progress {
  flex: 1;
  height: 28px;
  border: 1px solid #bcbcbc;
  background: #e6e6e6;
}
.dialog .browse,
.dialog .open,
.dialog .go,
.dialog .cancel {
  height: 34px;
  border: 1px solid #d0d0d0;
  border-radius: 4px;
  background: #fdfdfd;
}
.dialog .browse {
  width: 114px;
  margin: 0 12px;
}
.dialog .open {
  width: 82px;
}
.d-foot {
  display: flex;
  align-items: center;
  margin-top: 12px;
  padding-left: 7px;
}
.d-foot input {
  position: relative;
  width: 16px;
  height: 16px;
  margin-right: 4px;
  border: 1px solid #0a5aa8;
  border-radius: 3px;
  appearance: none;
}
.d-foot input:checked {
  background: #0a5aa8;
}
.d-foot input:checked::after {
  content: "";
  position: absolute;
  top: 4px;
  left: 3px;
  width: 8px;
  height: 4px;
  border: 1px solid #fff;
  border-width: 0 0 1px 1px;
  transform: rotate(-45deg);
}
.dialog .go {
  width: 121px;
  margin: 0 4px 0 auto;
  border-color: #1c6fa0;
}
.dialog .cancel {
  width: 94px;
}
/* 红框标注 */
.mark {
  position: absolute;
  border: 5px solid #ee1c0c;
  border-radius: 9px;
  pointer-events: none;
}
.mark-path {
  top: 45px;
  left: -1px;
  width: 188px;
  height: 80px;
}
.mark-go {
  top: 167px;
  left: 215px;
  width: 160px;
  height: 63px;
}
.tip {
  margin: 80px 0 0;
  padding-left: 4px;
  color: #f0180c;
  font-family: "Liberation Serif", "Noto Serif CJK SC", "Noto Sans CJK SC", serif;
  font-size: 46px;
  line-height: 60px;
}
</style>
